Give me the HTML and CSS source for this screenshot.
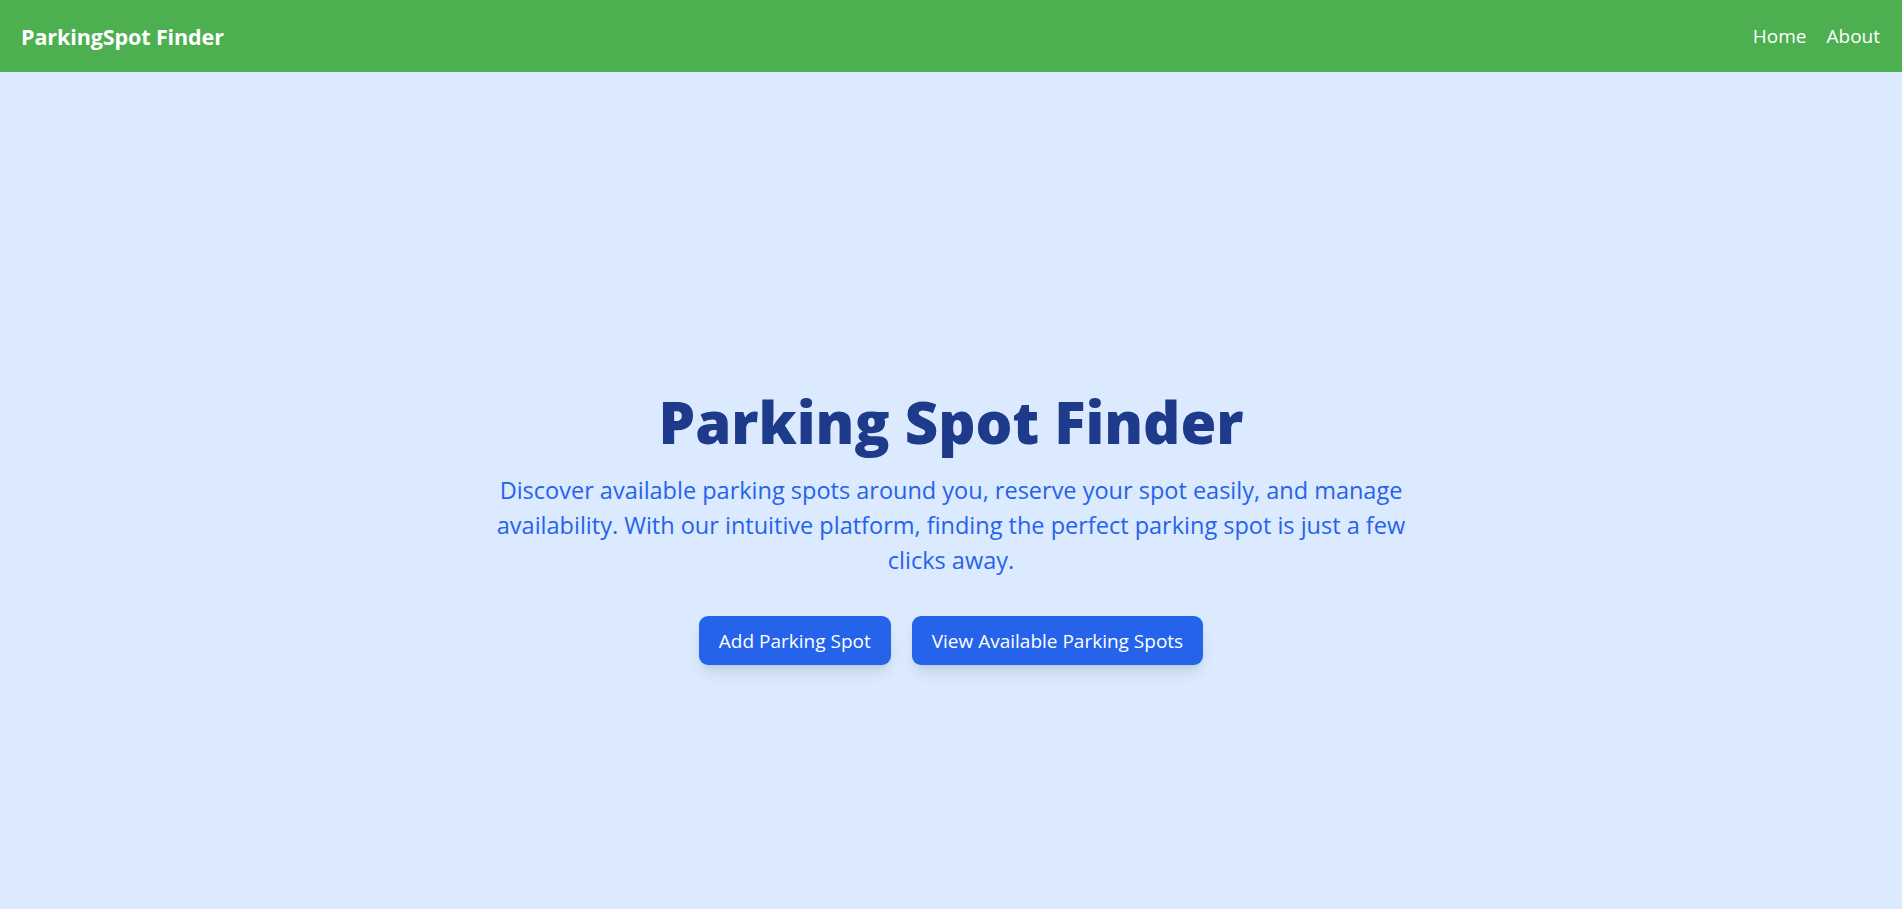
FILE: index.html
```html
<!DOCTYPE html>
<html lang="en">
<head>
<meta charset="utf-8">
<title>ParkingSpot Finder</title>
<link rel="stylesheet" href="styles.css">
</head>
<body>
<nav class="navbar">
  <a class="brand" href="#">ParkingSpot Finder</a>
  <div class="nav-links">
    <a href="#">Home</a>
    <a href="#">About</a>
  </div>
</nav>
<main class="hero">
  <h1 class="hero-title">Parking Spot Finder</h1>
  <p class="hero-text">Discover available parking spots around you, reserve your spot easily, and manage availability. With our intuitive platform, finding the perfect parking spot is just a few clicks away.</p>
  <div class="hero-actions">
    <a class="btn" href="#">Add Parking Spot</a>
    <a class="btn" href="#">View Available Parking Spots</a>
  </div>
</main>
</body>
</html>
```
FILE: styles.css
```css
* { box-sizing: border-box; }
html, body { margin: 0; padding: 0; }
body {
  font-family: "Open Sans", "Noto Sans", sans-serif;
  background: #dbeafe;
  color: #1e3a8a;
}
a { text-decoration: none; color: inherit; }
.navbar {
  height: 72px;
  background: #4caf50;
  display: flex;
  align-items: center;
  justify-content: space-between;
  padding: 0 22px 0 21px;
  color: #fff;
}
.brand {
  font-size: 21.5px;
  font-weight: 700;
  letter-spacing: -0.1px;
}
.nav-links {
  display: flex;
  gap: 20px;
  font-size: 19px;
}
.hero {
  min-height: 100vh;
  display: flex;
  flex-direction: column;
  align-items: center;
  justify-content: center;
  text-align: center;
  padding: 5px 20px 0;
}
.hero-title {
  margin: 0;
  font-size: 58px;
  line-height: 1;
  font-weight: 800;
  color: #1e3a8a;
}
.hero-text {
  margin: 22px 0 0;
  max-width: 950px;
  font-size: 23.5px;
  line-height: 35px;
  color: #2563eb;
}
.hero-actions {
  margin-top: 38px;
  display: flex;
  gap: 21px;
}
.btn {
  display: inline-flex;
  align-items: center;
  height: 49px;
  padding: 0 20px;
  background: #2563eb;
  color: #fff;
  font-size: 19px;
  border-radius: 9px;
  box-shadow: 0 10px 15px -3px rgba(0,0,0,0.1), 0 4px 6px -4px rgba(0,0,0,0.1);
}
```
